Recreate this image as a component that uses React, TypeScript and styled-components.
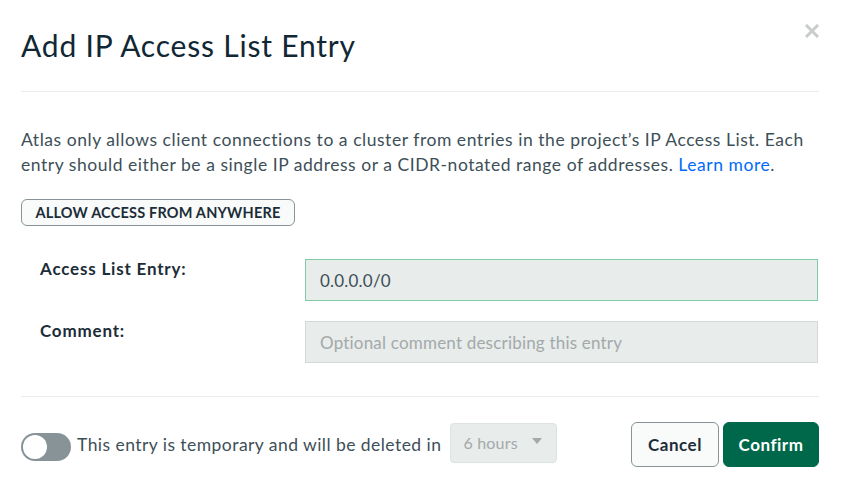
import React from "react";
import styled, { createGlobalStyle } from "styled-components";

const Global = createGlobalStyle`
  html, body { margin: 0; padding: 0; background: #ffffff; }
  body { font-family: Lato, "Open Sans", sans-serif; color: #3d4f58; }
  * { box-sizing: border-box; }
`;

const Dialog = styled.div`
  width: 850px;
  height: 478px;
  padding: 0 31px 0 21px;
  display: flex;
  flex-direction: column;
`;

const Header = styled.header`
  height: 92px;
  display: flex;
  justify-content: space-between;
  align-items: flex-start;
  border-bottom: 1px solid #e8edeb;
`;

const Title = styled.h1`
  margin: 26px 0 0;
  font-size: 30px;
  font-weight: 400;
  line-height: 38px;
  letter-spacing: 0.8px;
  color: #112733;
`;

const Close = styled.button`
  margin: 22px -2px 0 0;
  padding: 0;
  border: none;
  background: none;
  width: 18px;
  height: 18px;
  display: flex;
  align-items: center;
  justify-content: center;
  cursor: pointer;
`;

const Body = styled.section`
  padding-top: 36px;
  display: flex;
  flex-direction: column;
  align-items: flex-start;
  border-bottom: 1px solid #e8edeb;
  height: 305px;
`;

const Text = styled.p`
  margin: 0;
  font-size: 17.5px;
  line-height: 24.5px;
  letter-spacing: 0.54px;
  color: #3d4f58;
`;

const Link = styled.a`
  color: #016bf8;
  text-decoration: none;
`;

const SmallButton = styled.button`
  margin-top: 22px;
  width: 274px;
  height: 27px;
  padding: 0;
  border: 1px solid #889397;
  border-radius: 6px;
  background: #f9fbfa;
  font-family: Lato, sans-serif;
  font-weight: 700;
  font-size: 14.5px;
  letter-spacing: 0.2px;
  color: #1c2d38;
`;

const Form = styled.div`
  margin-top: 33px;
  width: 100%;
  display: grid;
  grid-template-columns: 265px 1fr;
  row-gap: 20px;
  padding-left: 19px;
`;

const Label = styled.label`
  font-weight: 700;
  font-size: 17px;
  letter-spacing: 0.8px;
  color: #1c2d38;
  line-height: 20px;
`;

const Field = styled.div<{ $focused?: boolean }>`
  height: 42px;
  border: 1px solid ${(p) => (p.$focused ? "#7fcba5" : "#d4d9d8")};
  background: #e8ecea;
  display: flex;
  align-items: center;
  padding: 0 14px;
  font-size: 17px;
  letter-spacing: 0.2px;
  color: ${(p) => (p.$focused ? "#3d4f58" : "#a3a9ab")};
  margin-right: 1px;
`;

const Footer = styled.footer`
  flex: 1;
  display: flex;
  align-items: center;
  padding-top: 14px;
`;

const Toggle = styled.div`
  width: 50px;
  height: 28px;
  border-radius: 14px;
  background: #889397;
  position: relative;
  flex-shrink: 0;
  margin-top: 5px;
`;

const Knob = styled.span`
  position: absolute;
  left: 2px;
  top: 2px;
  width: 24px;
  height: 24px;
  border-radius: 50%;
  background: #ffffff;
`;

const ToggleText = styled.span`
  margin-left: 6px;
  font-size: 17.5px;
  letter-spacing: 0.45px;
  color: #3d4f58;
`;

const Select = styled.div`
  margin-left: 9px;
  width: 107px;
  height: 40px;
  border: 1px solid #dde3e1;
  border-radius: 4px;
  background: #e8ecea;
  display: flex;
  align-items: center;
  justify-content: space-between;
  padding: 0 14px 0 12px;
  font-size: 16px;
  letter-spacing: 0.2px;
  color: #a3a9ab;
  margin-top: -4px;
`;

const Caret = styled.span`
  width: 0;
  height: 0;
  border-left: 5px solid transparent;
  border-right: 5px solid transparent;
  border-top: 6px solid #a3a9ab;
  align-self: flex-start;
  margin-top: 14px;
`;

const Actions = styled.div`
  margin-left: auto;
  display: flex;
  gap: 4px;
`;

const ActionButton = styled.button<{ $primary?: boolean }>`
  height: 45px;
  width: ${(p) => (p.$primary ? "96px" : "88px")};
  padding: 0;
  border-radius: 6px;
  border: 1px solid ${(p) => (p.$primary ? "#00684a" : "#889397")};
  background: ${(p) => (p.$primary ? "#00684a" : "#f9fbfa")};
  color: ${(p) => (p.$primary ? "#ffffff" : "#1c2d38")};
  font-family: Lato, sans-serif;
  font-weight: 700;
  font-size: 17px;
  letter-spacing: 0.5px;
  cursor: pointer;
`;

export default function App() {
  return (
    <>
      <Global />
      <Dialog>
        <Header>
          <Title>Add IP Access List Entry</Title>
          <Close aria-label="Close">
            <svg width="14" height="14" viewBox="0 0 14 14">
              <path d="M2 2 L12 12 M12 2 L2 12" stroke="#c8cccd" strokeWidth="3" strokeLinecap="square" />
            </svg>
          </Close>
        </Header>
        <Body>
          <Text>
            Atlas only allows client connections to a cluster from entries in the project’s IP Access List. Each
            <br />
            entry should either be a single IP address or a CIDR-notated range of addresses. <Link href="#">Learn more</Link>.
          </Text>
          <SmallButton>ALLOW ACCESS FROM ANYWHERE</SmallButton>
          <Form>
            <Label>Access List Entry:</Label>
            <Field $focused>0.0.0.0/0</Field>
            <Label>Comment:</Label>
            <Field>Optional comment describing this entry</Field>
          </Form>
        </Body>
        <Footer>
          <Toggle>
            <Knob />
          </Toggle>
          <ToggleText>This entry is temporary and will be deleted in</ToggleText>
          <Select>
            6 hours
            <Caret />
          </Select>
          <Actions>
            <ActionButton>Cancel</ActionButton>
            <ActionButton $primary>Confirm</ActionButton>
          </Actions>
        </Footer>
      </Dialog>
    </>
  );
}
